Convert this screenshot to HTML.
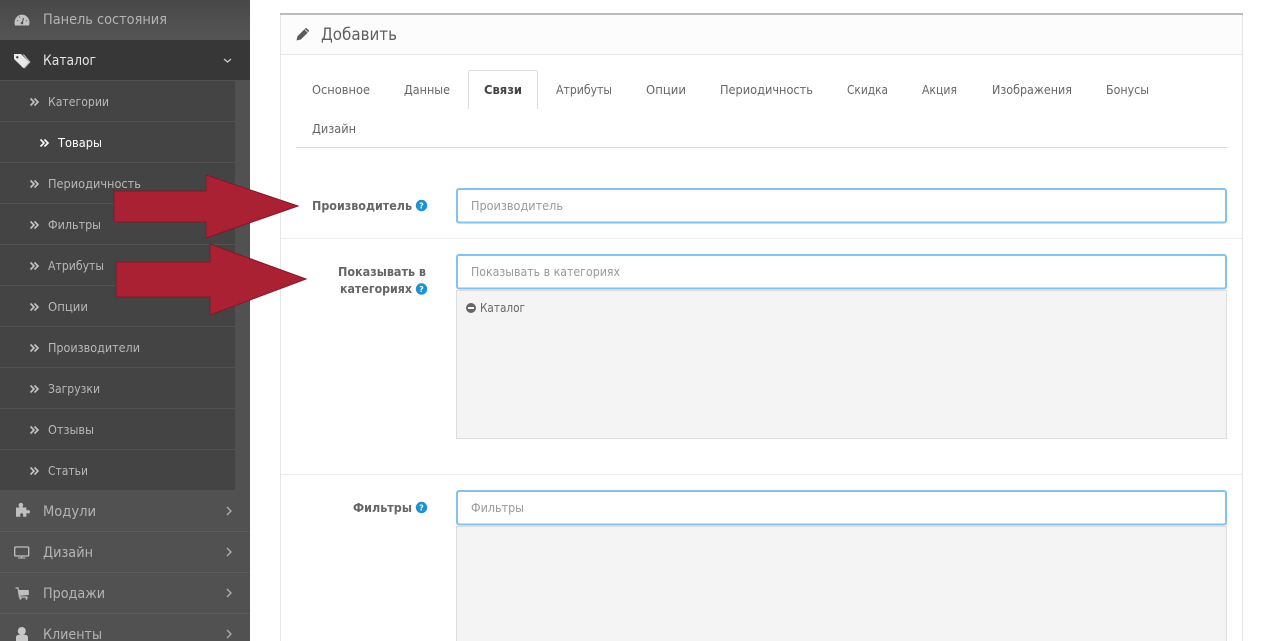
<!DOCTYPE html>
<html lang="ru">
<head>
<meta charset="utf-8">
<title>Добавить</title>
<style>
html,body{margin:0;padding:0;width:1280px;height:641px;overflow:hidden;background:#fff}
svg{display:block;position:absolute;left:0;top:0}
text{font-family:"DejaVu Sans","Liberation Sans",sans-serif}
.m{font-size:14px;fill:#b4b4b4}
.s{font-size:12px;fill:#b8b8b8}
.t{font-size:12px;fill:#666}
.l{font-size:12px;font-weight:bold;fill:#666}
.p{font-size:12px;fill:#999}
.q{font-size:8px;font-weight:bold;fill:#fff}
</style>
</head>
<body>
<svg width="1280" height="641" viewBox="0 0 1280 641" xmlns="http://www.w3.org/2000/svg">
<defs>
<linearGradient id="g1" x1="0" y1="0" x2="0" y2="1"><stop offset="0" stop-color="#484848"/><stop offset="1" stop-color="#555"/></linearGradient>
</defs>

<!-- sidebar -->
<rect x="0" y="0" width="250" height="641" fill="#515151"/>
<rect x="0" y="0" width="250" height="40" fill="url(#g1)"/>
<rect x="0" y="40" width="250" height="41" fill="#373737"/>
<rect x="0" y="80" width="250" height="1" fill="#515151"/>
<rect x="0" y="81" width="235" height="409" fill="#444"/>
<g fill="#515151">
<rect x="0" y="121" width="235" height="1"/><rect x="0" y="162" width="235" height="1"/>
<rect x="0" y="203" width="235" height="1"/><rect x="0" y="244" width="235" height="1"/>
<rect x="0" y="285" width="235" height="1"/><rect x="0" y="326" width="235" height="1"/>
<rect x="0" y="367" width="235" height="1"/><rect x="0" y="408" width="235" height="1"/>
<rect x="0" y="449" width="235" height="1"/>
</g>
<g fill="#5c5c5c">
<rect x="0" y="531" width="250" height="1"/><rect x="0" y="572" width="250" height="1"/><rect x="0" y="613" width="250" height="1"/>
</g>

<!-- sidebar main text -->
<text class="m" x="43" y="24" textLength="124" lengthAdjust="spacingAndGlyphs">Панель состояния</text>
<text class="m" x="43" y="65" textLength="53" lengthAdjust="spacingAndGlyphs" style="fill:#e4e4e4">Каталог</text>
<text class="m" x="43" y="516" textLength="53" lengthAdjust="spacingAndGlyphs">Модули</text>
<text class="m" x="43" y="557" textLength="50" lengthAdjust="spacingAndGlyphs">Дизайн</text>
<text class="m" x="43" y="598" textLength="62" lengthAdjust="spacingAndGlyphs">Продажи</text>
<text class="m" x="43" y="639" textLength="59" lengthAdjust="spacingAndGlyphs">Клиенты</text>

<!-- sidebar sub text -->
<text class="s" x="48" y="106" textLength="61" lengthAdjust="spacingAndGlyphs">Категории</text>
<text class="s" x="58" y="147" textLength="44" lengthAdjust="spacingAndGlyphs" style="fill:#fff">Товары</text>
<text class="s" x="48" y="188" textLength="93" lengthAdjust="spacingAndGlyphs">Периодичность</text>
<text class="s" x="48" y="229" textLength="53" lengthAdjust="spacingAndGlyphs">Фильтры</text>
<text class="s" x="48" y="270" textLength="56" lengthAdjust="spacingAndGlyphs">Атрибуты</text>
<text class="s" x="48" y="311" textLength="40" lengthAdjust="spacingAndGlyphs">Опции</text>
<text class="s" x="48" y="352" textLength="92" lengthAdjust="spacingAndGlyphs">Производители</text>
<text class="s" x="48" y="393" textLength="52" lengthAdjust="spacingAndGlyphs">Загрузки</text>
<text class="s" x="48" y="434" textLength="46" lengthAdjust="spacingAndGlyphs">Отзывы</text>
<text class="s" x="48" y="475" textLength="40" lengthAdjust="spacingAndGlyphs">Статьи</text>

<!-- double chevrons -->
<g fill="none" stroke="#c4c4c4" stroke-width="1.6">
<path d="M30.500 98.500l3.500 3.500-3.500 3.500M34.500 98.500l3.500 3.500-3.500 3.500"/>
<path d="M30.500 180.500l3.500 3.500-3.500 3.500M34.500 180.500l3.500 3.500-3.500 3.500"/>
<path d="M30.500 221.500l3.500 3.500-3.500 3.500M34.500 221.500l3.500 3.500-3.500 3.500"/>
<path d="M30.500 262.500l3.500 3.500-3.500 3.500M34.500 262.500l3.500 3.500-3.500 3.500"/>
<path d="M30.500 303.500l3.500 3.500-3.500 3.500M34.500 303.500l3.500 3.500-3.500 3.500"/>
<path d="M30.500 344.500l3.500 3.500-3.500 3.500M34.500 344.500l3.500 3.500-3.500 3.500"/>
<path d="M30.500 385.500l3.500 3.500-3.500 3.500M34.500 385.500l3.500 3.500-3.500 3.500"/>
<path d="M30.500 426.500l3.500 3.500-3.500 3.500M34.500 426.500l3.500 3.500-3.500 3.500"/>
<path d="M30.500 467.500l3.500 3.500-3.500 3.500M34.500 467.500l3.500 3.500-3.500 3.500"/>
<path stroke="#fff" d="M40.500 139.500l3.500 3.500-3.500 3.500M44.500 139.500l3.500 3.500-3.500 3.500"/>
</g>

<!-- chevrons right column -->
<g fill="none" stroke="#b0b0b0" stroke-width="1.3">
<path d="M224 59l3.500 3 3.500-3" stroke="#c8c8c8"/>
<path d="M227 507l4 4-4 4"/><path d="M227 548l4 4-4 4"/><path d="M227 589l4 4-4 4"/><path d="M227 630l4 4-4 4"/>
</g>

<!-- main icons -->
<!-- dashboard -->
<path d="M15 25.500a7.500 8 0 1 1 14 0z" fill="#c2c2c2"/>
<path d="M22 24l1.500-6" stroke="#515151" stroke-width="1.100"/>
<circle cx="22" cy="23" r="1.300" fill="#515151"/>
<g fill="#6e6e6e"><rect x="17" y="20" width="1.200" height="1.200"/><rect x="19" y="16.500" width="1.200" height="1.200"/><rect x="26" y="20" width="1.200" height="1.200"/></g>
<!-- tag -->
<path d="M14 54h7l8.500 8.500-6 5.800-9.500-9.300z" fill="#e8e8e8"/>
<path d="M24 54.500l6.500 7.500-6 6.500-1-.8 5.500-5.700-6.500-7.500z" fill="#c4c4c4"/>
<circle cx="17.300" cy="57.300" r="1.200" fill="#373737"/>
<!-- puzzle -->
<path d="M16 507.500h3.200v-1a2.200 2.200 0 1 1 3.400 0v1h3.800v2.800h1.200a1.700 1.700 0 1 1 0 3h-1.200v3.400h-3.300v-1.400a1.500 1.500 0 1 0-2.800 0v1.400h-4.300z" fill="#c0c0c0"/>
<!-- desktop -->
<rect x="14.700" y="547" width="14" height="9" rx="1" fill="none" stroke="#c0c0c0" stroke-width="1.300"/>
<path d="M21.700 556v1.700M18 558h7.500" stroke="#c0c0c0" stroke-width="1.100" fill="none"/>
<!-- cart -->
<path d="M15.500 588h2.500l1.500 9h8" fill="none" stroke="#c0c0c0" stroke-width="1.200"/>
<path d="M18.800 590h10v5l-9 .8z" fill="#c0c0c0"/>
<circle cx="20.500" cy="598.500" r="1.100" fill="#c0c0c0"/><circle cx="26.500" cy="598.500" r="1.100" fill="#c0c0c0"/>
<!-- user -->
<circle cx="21.800" cy="631" r="4" fill="#c8c8c8"/>
<path d="M16 641v-3.500q0-2.500 3-2.800h6q3 .3 3 2.800v3.500z" fill="#c8c8c8"/>

<!-- panel -->
<rect x="280.500" y="14" width="962" height="640" fill="#fff" stroke="#e6e6e6"/>
<rect x="281" y="15" width="961" height="39" fill="#fcfcfc"/>
<rect x="280" y="13" width="963" height="2" fill="#bbb"/>
<rect x="281" y="54" width="961" height="1" fill="#e8e8e8"/>
<!-- pencil -->
<path d="M296.500 40.500l1-4.300 8-8 .8-.3 2.800 2.800-.3.8-8 8z" fill="#5a5a5a"/>
<path d="M305 29.500l3 3" stroke="#fcfcfc" stroke-width=".8"/>
<text x="321" y="40" font-size="17" fill="#5f5f5f" textLength="76" lengthAdjust="spacingAndGlyphs">Добавить</text>

<!-- tabs -->
<rect x="296" y="147" width="931" height="1" fill="#ddd"/>
<path d="M468.500 109V72.500q0-2 2-2h65q2 0 2 2V109" fill="#fff" stroke="#ddd"/>
<text class="t" x="312" y="94" textLength="58" lengthAdjust="spacingAndGlyphs">Основное</text>
<text class="t" x="404" y="94" textLength="46" lengthAdjust="spacingAndGlyphs">Данные</text>
<text class="t" x="484" y="94" textLength="38" lengthAdjust="spacingAndGlyphs" style="font-weight:bold;fill:#444">Связи</text>
<text class="t" x="556" y="94" textLength="56" lengthAdjust="spacingAndGlyphs">Атрибуты</text>
<text class="t" x="646" y="94" textLength="40" lengthAdjust="spacingAndGlyphs">Опции</text>
<text class="t" x="720" y="94" textLength="93" lengthAdjust="spacingAndGlyphs">Периодичность</text>
<text class="t" x="847" y="94" textLength="41" lengthAdjust="spacingAndGlyphs">Скидка</text>
<text class="t" x="922" y="94" textLength="35" lengthAdjust="spacingAndGlyphs">Акция</text>
<text class="t" x="992" y="94" textLength="80" lengthAdjust="spacingAndGlyphs">Изображения</text>
<text class="t" x="1106" y="94" textLength="43" lengthAdjust="spacingAndGlyphs">Бонусы</text>
<text class="t" x="312" y="133" textLength="44" lengthAdjust="spacingAndGlyphs">Дизайн</text>

<!-- row separators -->
<rect x="281" y="238" width="961" height="1" fill="#ececec"/>
<rect x="281" y="474" width="961" height="1" fill="#ececec"/>

<!-- labels -->
<text class="l" x="312" y="210" textLength="100" lengthAdjust="spacingAndGlyphs">Производитель</text>
<text class="l" x="338" y="276" textLength="88" lengthAdjust="spacingAndGlyphs">Показывать в</text>
<text class="l" x="340" y="293" textLength="72" lengthAdjust="spacingAndGlyphs">категориях</text>
<text class="l" x="353" y="512" textLength="59" lengthAdjust="spacingAndGlyphs">Фильтры</text>
<circle cx="421.500" cy="205.500" r="5.700" fill="#1e91cf"/><text class="q" x="421.500" y="208.500" text-anchor="middle">?</text>
<circle cx="421.500" cy="289" r="5.700" fill="#1e91cf"/><text class="q" x="421.500" y="292" text-anchor="middle">?</text>
<circle cx="421.500" cy="507.500" r="5.700" fill="#1e91cf"/><text class="q" x="421.500" y="510.500" text-anchor="middle">?</text>

<!-- well boxes -->
<rect x="456.500" y="290.500" width="770" height="148" fill="#f4f4f4" stroke="#ddd"/>
<rect x="456.500" y="526.500" width="770" height="130" fill="#f4f4f4" stroke="#ddd"/>

<!-- inputs -->
<rect x="457" y="189" width="769" height="33.500" rx="2" fill="#fff" stroke="#82c2ec" stroke-width="2"/>
<rect x="457" y="255" width="769" height="33.500" rx="2" fill="#fff" stroke="#82c2ec" stroke-width="2"/>
<rect x="457" y="491" width="769" height="33.500" rx="2" fill="#fff" stroke="#82c2ec" stroke-width="2"/>
<text class="p" x="471" y="210" textLength="92" lengthAdjust="spacingAndGlyphs">Производитель</text>
<text class="p" x="471" y="276" textLength="149" lengthAdjust="spacingAndGlyphs">Показывать в категориях</text>
<text class="p" x="471" y="512" textLength="53" lengthAdjust="spacingAndGlyphs">Фильтры</text>

<!-- well item -->
<circle cx="471" cy="308" r="5" fill="#666"/>
<rect x="468" y="307" width="6" height="2" fill="#f4f4f4"/>
<text x="480" y="312" font-size="12" fill="#666" textLength="45" lengthAdjust="spacingAndGlyphs">Каталог</text>

<!-- arrows -->
<polygon points="114,191 206,191 206,175 298,206 206,238 206,222 114,222" fill="#ab2134" stroke="#7d1a2d" stroke-width="1"/>
<polygon points="116,262 210,262 210,244 306,279 210,315 210,297 116,297" fill="#ab2134" stroke="#7d1a2d" stroke-width="1"/>
</svg>
</body>
</html>
